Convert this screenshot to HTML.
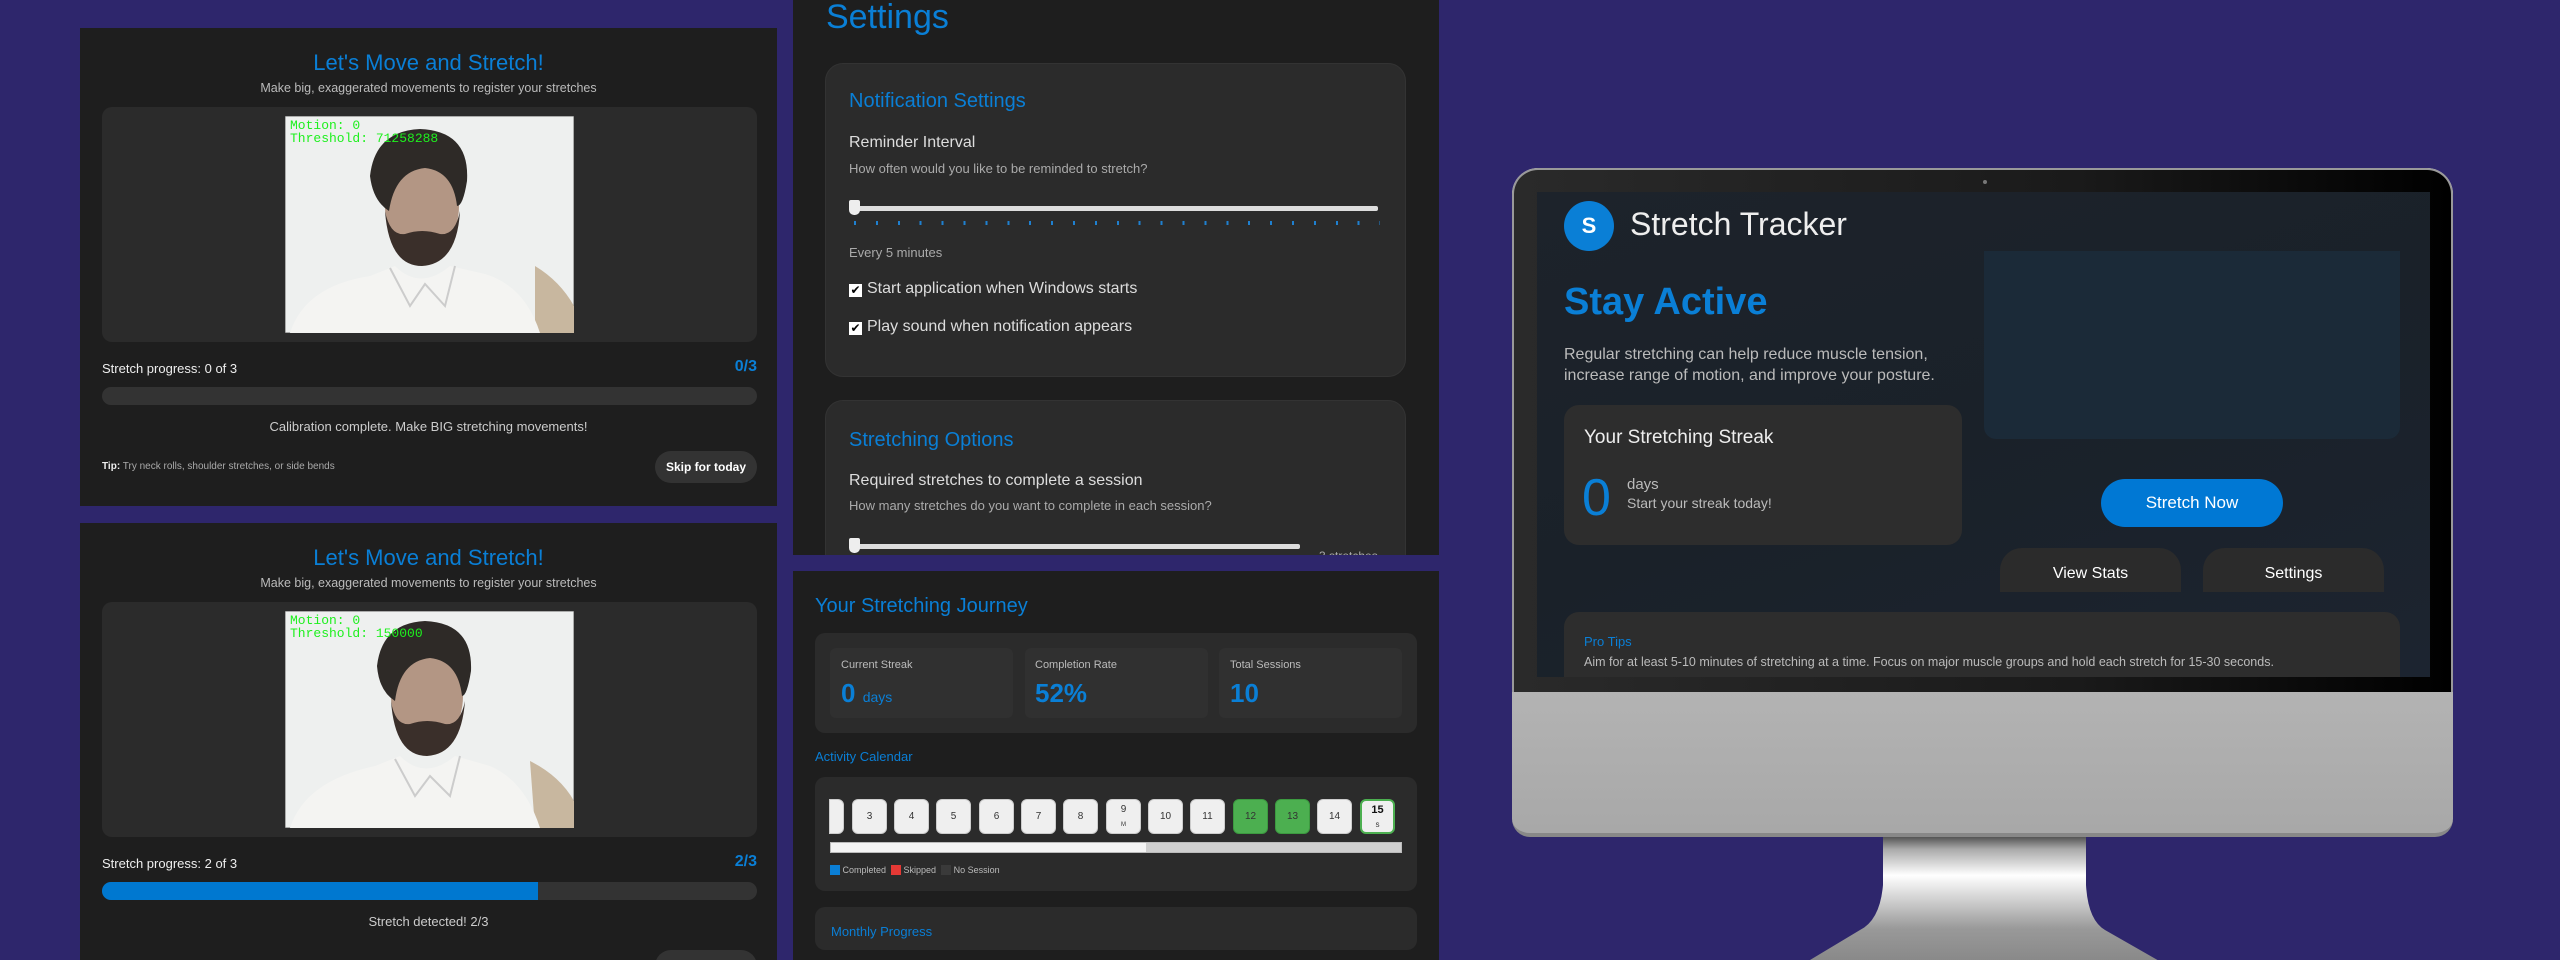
<!DOCTYPE html>
<html><head><meta charset="utf-8">
<style>
*{margin:0;padding:0;box-sizing:border-box}
body{width:2560px;height:960px;background:#2e266c;position:relative;overflow:hidden;font-family:"Liberation Sans",sans-serif;}
.abs{position:absolute}
.panel{position:absolute;background:#1e1e1e;overflow:hidden}
.blue{color:#0a7fd6}
.t{position:absolute;white-space:nowrap}
.card{position:absolute;background:#2b2b2b;border:1px solid #333;border-radius:18px}
.day{position:absolute;top:799px;width:35px;height:35px;background:#efefef;border:1px solid #ccc;border-radius:6px;font-size:10px;color:#333;text-align:center;line-height:33px}
</style></head><body>

<!-- Panel 1 -->
<div class="panel" style="left:80px;top:28px;width:697px;height:478px">
  <div class="t blue" style="left:0;width:697px;text-align:center;top:22px;font-size:22px">Let's Move and Stretch!</div>
  <div class="t" style="left:0;width:697px;text-align:center;top:53px;font-size:12.5px;color:#bbb">Make big, exaggerated movements to register your stretches</div>
  <div class="abs" style="left:22px;top:79px;width:655px;height:235px;background:#2b2b2b;border-radius:10px"></div>
  <svg class="abs" style="left:205px;top:88px" width="289" height="217" viewBox="0 0 289 217">
    <rect width="289" height="217" fill="#eef0ef" stroke="#666"/>
    <path d="M250 150 Q275 165 289 190 L289 217 L250 217Z" fill="#c8b79f"/>
    <path d="M5 217 Q20 170 85 160 L110 150 Q135 175 165 150 L200 158 Q240 170 255 217Z" fill="#f4f4f2"/>
    <path d="M105 152 L125 190 L140 168 L160 190 L170 150" fill="none" stroke="#ccc" stroke-width="2"/>
    <ellipse cx="137" cy="90" rx="37" ry="50" fill="#b39684"/>
    <path d="M100 95 Q104 150 137 150 Q172 148 175 95 Q170 120 155 118 Q137 112 120 118 Q105 120 100 95Z" fill="#3a2f2a"/>
    <path d="M85 60 Q90 15 135 13 Q185 15 182 65 Q178 90 172 90 Q168 55 140 52 Q110 55 104 95 Q88 85 85 60Z" fill="#2e2a27"/>
    <text x="5" y="13" font-family="Liberation Mono,monospace" font-size="13" fill="#1ef01e">Motion: 0</text>
    <text x="5" y="26" font-family="Liberation Mono,monospace" font-size="13" fill="#1ef01e">Threshold: 71258288</text>
  </svg>
  <div class="t" style="left:22px;top:333px;font-size:13px;color:#eee">Stretch progress: 0 of 3</div>
  <div class="t blue" style="right:20px;top:330px;font-size:16px;font-weight:bold">0/3</div>
  <div class="abs" style="left:22px;top:359px;width:655px;height:18px;background:#333;border-radius:9px"></div>
  <div class="t" style="left:0;width:697px;text-align:center;top:391px;font-size:13px;color:#ccc">Calibration complete. Make BIG stretching movements!</div>
  <div class="t" style="left:22px;top:433px;font-size:10px;color:#aaa"><b style="color:#eee">Tip:</b> Try neck rolls, shoulder stretches, or side bends</div>
  <div class="abs" style="left:575px;top:423px;width:102px;height:32px;background:#333;border-radius:16px;color:#fff;font-size:12px;font-weight:bold;text-align:center;line-height:32px">Skip for today</div>
</div>

<!-- Panel 1b -->
<div class="panel" style="left:80px;top:523px;width:697px;height:437px">
  <div class="t blue" style="left:0;width:697px;text-align:center;top:22px;font-size:22px">Let's Move and Stretch!</div>
  <div class="t" style="left:0;width:697px;text-align:center;top:53px;font-size:12.5px;color:#bbb">Make big, exaggerated movements to register your stretches</div>
  <div class="abs" style="left:22px;top:79px;width:655px;height:235px;background:#2b2b2b;border-radius:10px"></div>
  <svg class="abs" style="left:205px;top:88px" width="289" height="217" viewBox="0 0 289 217">
    <rect width="289" height="217" fill="#eef0ef" stroke="#666"/>
    <path d="M245 150 Q275 165 289 190 L289 217 L250 217Z" fill="#c8b79f"/>
    <path d="M5 217 Q20 170 90 155 L115 145 Q140 170 170 145 L205 155 Q240 170 255 217Z" fill="#f4f4f2"/>
    <path d="M110 148 L130 185 L145 165 L165 185 L175 145" fill="none" stroke="#ccc" stroke-width="2"/>
    <ellipse cx="142" cy="85" rx="36" ry="50" fill="#b39684"/>
    <path d="M106 90 Q110 145 142 145 Q176 143 180 90 Q175 115 160 113 Q142 107 125 113 Q110 115 106 90Z" fill="#3a2f2a"/>
    <path d="M92 55 Q97 12 140 10 Q188 12 186 60 Q182 85 177 85 Q173 50 145 47 Q115 50 110 90 Q94 80 92 55Z" fill="#2e2a27"/>
    <text x="5" y="13" font-family="Liberation Mono,monospace" font-size="13" fill="#1ef01e">Motion: 0</text>
    <text x="5" y="26" font-family="Liberation Mono,monospace" font-size="13" fill="#1ef01e">Threshold: 150000</text>
  </svg>
  <div class="t" style="left:22px;top:333px;font-size:13px;color:#eee">Stretch progress: 2 of 3</div>
  <div class="t blue" style="right:20px;top:330px;font-size:16px;font-weight:bold">2/3</div>
  <div class="abs" style="left:22px;top:359px;width:655px;height:18px;background:#333;border-radius:9px;overflow:hidden"><div style="width:436px;height:18px;background:#0078d0"></div></div>
  <div class="t" style="left:0;width:697px;text-align:center;top:391px;font-size:13px;color:#ccc">Stretch detected! 2/3</div>
  <div class="abs" style="left:575px;top:427px;width:102px;height:32px;background:#333;border-radius:16px"></div>
</div>

<!-- Panel 2 Settings -->
<div class="panel" style="left:793px;top:0;width:646px;height:555px">
  <div class="t blue" style="left:33px;top:-2px;font-size:34px">Settings</div>
  <div class="card" style="left:32px;top:63px;width:581px;height:314px">
    <div class="t blue" style="left:23px;top:26px;font-size:20px">Notification Settings</div>
    <div class="t" style="left:23px;top:70px;font-size:16px;color:#ddd">Reminder Interval</div>
    <div class="t" style="left:23px;top:97px;font-size:13px;color:#aaa">How often would you like to be reminded to stretch?</div>
    <div class="abs" style="left:28px;top:142px;width:524px;height:5px;background:#ddd;border-radius:2px"></div>
    <div class="abs" style="left:23px;top:136px;width:11px;height:15px;background:#eee;border-radius:2px 2px 5px 5px"></div>
    <div class="abs" style="left:28px;top:157px;width:526px;height:4px;background:repeating-linear-gradient(90deg,#1f80d0 0 2px,transparent 2px 21.9px)"></div>
    <div class="t" style="left:23px;top:181px;font-size:13px;color:#aaa">Every 5 minutes</div>
    <div class="t" style="left:23px;top:216px;font-size:16px;color:#ddd"><span style="display:inline-block;width:13px;height:13px;background:#fff;color:#000;font-size:12px;line-height:13px;text-align:center;vertical-align:-1px;margin-right:5px">✔</span>Start application when Windows starts</div>
    <div class="t" style="left:23px;top:254px;font-size:16px;color:#ddd"><span style="display:inline-block;width:13px;height:13px;background:#fff;color:#000;font-size:12px;line-height:13px;text-align:center;vertical-align:-1px;margin-right:5px">✔</span>Play sound when notification appears</div>
  </div>
  <div class="card" style="left:32px;top:400px;width:581px;height:200px">
    <div class="t blue" style="left:23px;top:28px;font-size:20px">Stretching Options</div>
    <div class="t" style="left:23px;top:71px;font-size:16px;color:#ddd">Required stretches to complete a session</div>
    <div class="t" style="left:23px;top:97px;font-size:13px;color:#aaa">How many stretches do you want to complete in each session?</div>
    <div class="abs" style="left:28px;top:143px;width:446px;height:5px;background:#ddd;border-radius:2px"></div>
    <div class="abs" style="left:23px;top:137px;width:11px;height:15px;background:#eee;border-radius:2px 2px 5px 5px"></div>
    <div class="t" style="left:493px;top:148px;font-size:12px;color:#aaa">3 stretches</div>
  </div>
</div>

<!-- Panel 3 Journey -->
<div class="panel" style="left:793px;top:571px;width:646px;height:389px">
  <div class="t blue" style="left:22px;top:24px;font-size:20px">Your Stretching Journey</div>
  <div class="abs" style="left:22px;top:62px;width:602px;height:100px;background:#2b2b2b;border-radius:10px"></div>
  <div class="abs" style="left:37px;top:77px;width:183px;height:70px;background:#303030;border-radius:6px"></div>
  <div class="abs" style="left:232px;top:77px;width:183px;height:70px;background:#303030;border-radius:6px"></div>
  <div class="abs" style="left:426px;top:77px;width:183px;height:70px;background:#303030;border-radius:6px"></div>
  <div class="t" style="left:48px;top:88px;font-size:11px;color:#bbb">Current Streak</div>
  <div class="t blue" style="left:48px;top:107px;font-size:26px;font-weight:bold">0 <span style="font-size:14px;font-weight:normal">days</span></div>
  <div class="t" style="left:242px;top:88px;font-size:11px;color:#bbb">Completion Rate</div>
  <div class="t blue" style="left:242px;top:107px;font-size:26px;font-weight:bold">52%</div>
  <div class="t" style="left:437px;top:88px;font-size:11px;color:#bbb">Total Sessions</div>
  <div class="t blue" style="left:437px;top:107px;font-size:26px;font-weight:bold">10</div>
  <div class="t blue" style="left:22px;top:178px;font-size:13px">Activity Calendar</div>
  <div class="abs" style="left:22px;top:206px;width:602px;height:114px;background:#2b2b2b;border-radius:10px"></div>
</div>
<div class="day" style="left:829px;width:15px;border-radius:0 6px 6px 0"></div>
<div class="day" style="left:852px">3</div>
<div class="day" style="left:894px">4</div>
<div class="day" style="left:936px">5</div>
<div class="day" style="left:979px">6</div>
<div class="day" style="left:1021px">7</div>
<div class="day" style="left:1063px">8</div>
<div class="day" style="left:1106px;line-height:14px;padding-top:3px">9<br><span style="font-size:6px">M</span></div>
<div class="day" style="left:1148px">10</div>
<div class="day" style="left:1190px">11</div>
<div class="day" style="left:1233px;background:#4caf50;border-color:#3c9a40">12</div>
<div class="day" style="left:1275px;background:#4caf50;border-color:#3c9a40">13</div>
<div class="day" style="left:1317px">14</div>
<div class="day" style="left:1360px;border:2px solid #4caf50;line-height:14px;padding-top:2px;font-weight:bold;font-size:11px;color:#111">15<br><span style="font-size:6px;font-weight:normal">S</span></div>
<div class="abs" style="left:830px;top:842px;width:572px;height:11px;background:#cfcfcf;border:1px solid #bbb"></div>
<div class="abs" style="left:831px;top:843px;width:315px;height:9px;background:#f4f4f4"></div>
<div class="t" style="left:830px;top:865px;font-size:9px;color:#bbb"><span style="display:inline-block;width:10px;height:10px;background:#0a7fd6;vertical-align:-2px"></span> Completed &nbsp;<span style="display:inline-block;width:10px;height:10px;background:#e53935;vertical-align:-2px"></span> Skipped &nbsp;<span style="display:inline-block;width:10px;height:10px;background:#3a3a3a;vertical-align:-2px"></span> No Session</div>
<div class="abs" style="left:815px;top:907px;width:602px;height:43px;background:#2b2b2b;border-radius:10px;overflow:hidden"><div class="t blue" style="left:16px;top:17px;font-size:13px">Monthly Progress</div></div>

<!-- Monitor -->
<svg class="abs" style="left:1760px;top:830px" width="450" height="130" viewBox="0 0 450 130">
  <defs><linearGradient id="st" x1="0" y1="0" x2="0" y2="1">
    <stop offset="0" stop-color="#555"/><stop offset="0.08" stop-color="#aaa"/><stop offset="0.25" stop-color="#fff"/><stop offset="0.6" stop-color="#999"/><stop offset="1" stop-color="#7a7a7a"/></linearGradient></defs>
  <path d="M123 7 L326 7 L326 55 Q328 90 345 100 L450 160 L0 160 L100 100 Q120 90 123 55Z" fill="url(#st)"/>
</svg>
<div class="abs" style="left:1512px;top:168px;width:941px;height:669px;border-radius:26px 26px 18px 18px;background:linear-gradient(#dcdcdc,#a8a8a8);border-bottom:4px solid #888;overflow:hidden">
  <div class="abs" style="left:0;top:0;width:941px;height:524px;background:linear-gradient(90deg,#2a2a2a,#1a1a1a 60%,#000);border:2px solid #999;border-bottom:none;border-radius:26px 26px 0 0"></div>
  <div class="abs" style="left:471px;top:12px;width:4px;height:4px;border-radius:2px;background:#777"></div>
  <div class="abs" style="left:25px;top:24px;width:893px;height:485px;background:linear-gradient(160deg,#1d232b,#1a2129 50%,#1c2430);overflow:hidden">
    <div class="abs" style="left:27px;top:9px;width:50px;height:50px;border-radius:25px;background:#0a7fd6;color:#fff;font-weight:bold;font-size:22px;text-align:center;line-height:50px">S</div>
    <div class="t" style="left:93px;top:14px;font-size:32px;color:#eee">Stretch Tracker</div>
    <div class="t blue" style="left:27px;top:89px;font-size:38px;font-weight:bold">Stay Active</div>
    <div class="t" style="left:27px;top:152px;font-size:16px;color:#bbb;line-height:21px">Regular stretching can help reduce muscle tension,<br>increase range of motion, and improve your posture.</div>
    <div class="abs" style="left:27px;top:213px;width:398px;height:140px;background:#2d2d2d;border-radius:15px"></div>
    <div class="t" style="left:47px;top:235px;font-size:19px;color:#eee">Your Stretching Streak</div>
    <div class="t blue" style="left:45px;top:280px;font-size:52px;line-height:1">0</div>
    <div class="t" style="left:90px;top:284px;font-size:15px;color:#bbb">days</div>
    <div class="t" style="left:90px;top:303px;font-size:14px;color:#bbb">Start your streak today!</div>
    <div class="abs" style="left:447px;top:59px;width:416px;height:188px;background:#1b2a38;border-radius:0 0 12px 12px"></div>
    <div class="abs" style="left:564px;top:287px;width:182px;height:48px;background:#0078d4;border-radius:24px;color:#fff;font-size:17px;text-align:center;line-height:48px">Stretch Now</div>
    <div class="abs" style="left:463px;top:356px;width:181px;height:44px;background:#2b2b2b;border-radius:22px 22px 0 0;color:#fff;font-size:16px;text-align:center;line-height:52px">View Stats</div>
    <div class="abs" style="left:666px;top:356px;width:181px;height:44px;background:#2b2b2b;border-radius:22px 22px 0 0;color:#fff;font-size:16px;text-align:center;line-height:52px">Settings</div>
    <div class="abs" style="left:27px;top:420px;width:836px;height:80px;background:#2d2d2d;border-radius:15px"></div>
    <div class="t blue" style="left:47px;top:442px;font-size:13px">Pro Tips</div>
    <div class="t" style="left:47px;top:463px;font-size:12.5px;color:#bbb">Aim for at least 5-10 minutes of stretching at a time. Focus on major muscle groups and hold each stretch for 15-30 seconds.</div>
  </div>
</div>
</body></html>
